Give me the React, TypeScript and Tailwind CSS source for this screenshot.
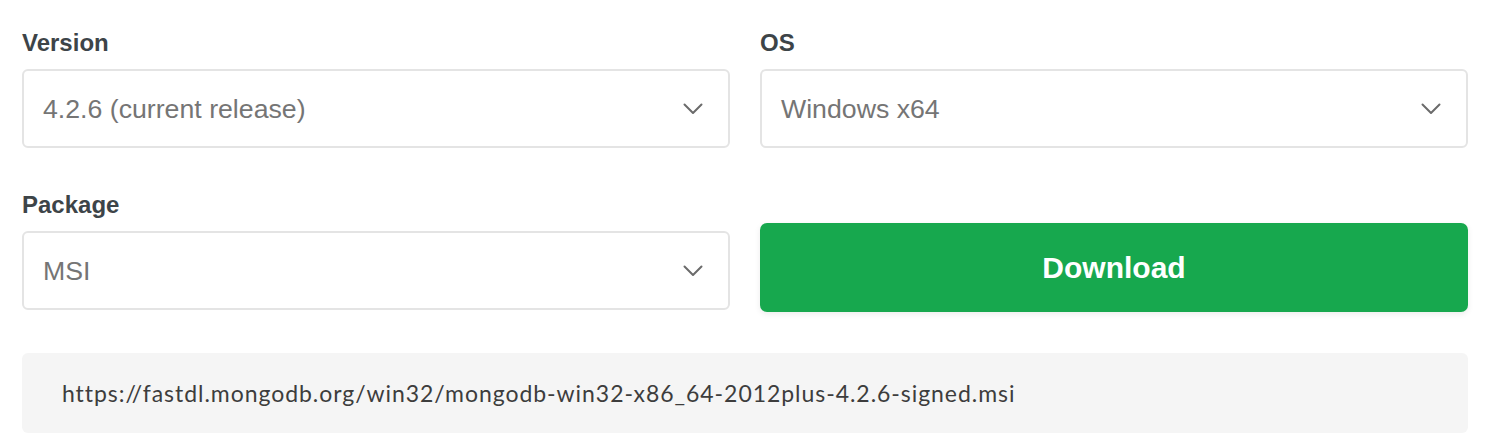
import React from 'react';

const Chevron: React.FC = () => (
  <svg width="20" height="12" viewBox="0 0 20 12" fill="none" className="shrink-0">
    <path d="M1.5 1.5 L10 10 L18.5 1.5" stroke="#6b6b6b" strokeWidth="2" strokeLinecap="round" strokeLinejoin="round" />
  </svg>
);

const Select: React.FC<{ label?: string; value: string }> = ({ label, value }) => (
  <div className="flex flex-col">
    {label && (
      <div className="text-[24px] font-bold text-[#3d4448] leading-none mb-[14px]">{label}</div>
    )}
    <div className="h-[79px] border-2 border-[#e4e4e4] rounded-[6px] bg-white flex items-center justify-between pl-[19px] pr-[25px]">
      <span className="text-[26.7px] text-[#757575] pt-[1px]">{value}</span>
      <Chevron />
    </div>
  </div>
);

const App: React.FC = () => {
  return (
    <div className="w-[1487px] h-[446px] bg-white pl-[22px] pr-[19px] pt-[31px]" style={{ fontFamily: '"Liberation Sans", Arial, sans-serif' }}>
      <div className="grid grid-cols-2 gap-x-[30px]">
        <Select label="Version" value="4.2.6 (current release)" />
        <Select label="OS" value="Windows x64" />
      </div>
      <div className="grid grid-cols-2 gap-x-[30px] mt-[45px] items-end">
        <Select label="Package" value="MSI" />
        <button className="h-[89px] mb-[-2px] rounded-[7px] bg-[#17a84e] text-white text-[30px] font-bold shadow-[0_2px_6px_rgba(0,0,0,0.08)]">
          Download
        </button>
      </div>
      <div className="mt-[43px] h-[80px] rounded-[6px] bg-[#f5f5f5] flex items-center pl-[40px]">
        <span className="text-[23px] text-[#3d3d3d] tracking-[0.95px]" style={{ fontFamily: 'Lato, sans-serif' }}>
          https://fastdl.mongodb.org/win32/mongodb-win32-x86_64-2012plus-4.2.6-signed.msi
        </span>
      </div>
    </div>
  );
};

export default App;
